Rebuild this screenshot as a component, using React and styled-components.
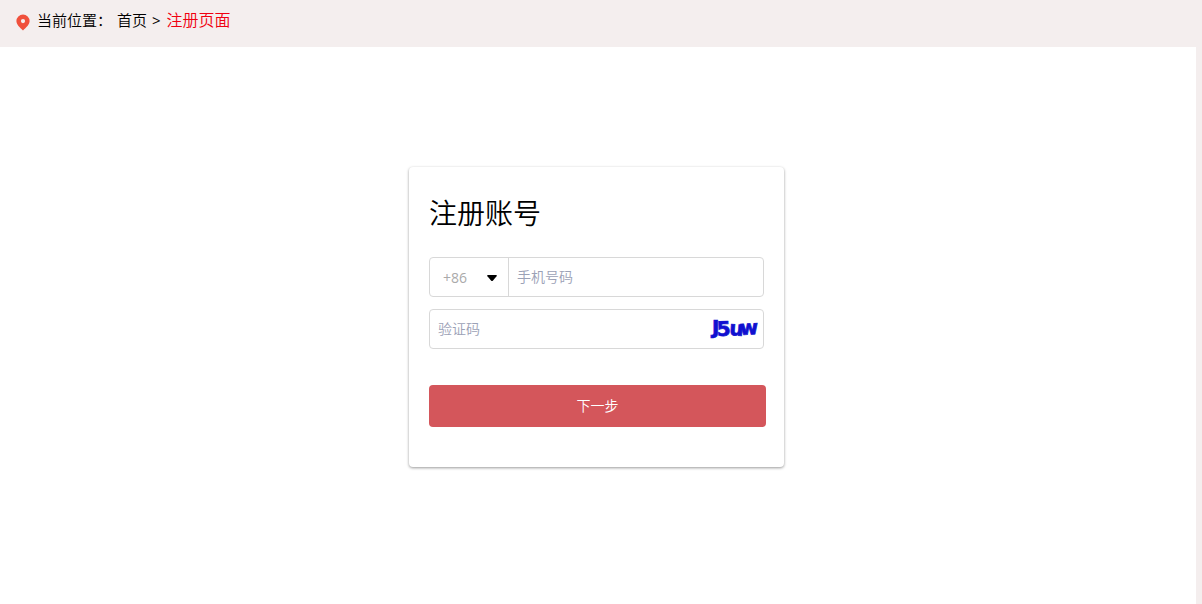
import React, { useState } from 'react';
import styled, { createGlobalStyle } from 'styled-components';

const GlobalStyle = createGlobalStyle`
  * {
    box-sizing: border-box;
  }

  body {
    margin: 0;
    background-color: #f4eeee;
    font-family: 'Open Sans', 'Noto Sans CJK SC', sans-serif;
    font-weight: 350;
    color: #000;
  }
`;

const PageContainer = styled.div`
  display: flex;
  flex-direction: column;
  min-height: 100vh;
`;

const Breadcrumb = styled.nav`
  display: flex;
  align-items: center;
  height: 47px;
  padding: 0 16px 8px;
  font-size: 15px;
  line-height: 20px;
`;

const PinIcon = styled.svg`
  width: 14px;
  height: 17px;
  margin: 5px 7px 0 0;
`;

const HomeLink = styled.a`
  margin: 0 5px;
  color: #000;
  text-decoration: none;
`;

const Separator = styled.span`
  font-weight: 400;
`;

const CurrentPage = styled.span`
  margin-left: 6px;
  font-size: 16px;
  color: #f00010;
`;

const Main = styled.main`
  display: flex;
  flex: 1;
  justify-content: center;
  align-items: flex-start;
  margin-right: 6px;
  padding: 120px 3px 40px 0;
  background-color: #fff;
`;

const Card = styled.form`
  width: 375px;
  padding: 24px 20px 40px;
  border-radius: 4px;
  background-color: #fff;
  box-shadow: 0 1px 3px rgba(0, 0, 0, 0.4);
`;

const Title = styled.h1`
  margin: 0 0 22px;
  font-size: 28px;
  font-weight: 350;
  line-height: 44px;
`;

const Field = styled.div`
  display: flex;
  align-items: center;
  height: 40px;
  margin-bottom: 12px;
  border: 1px solid #d8d8d8;
  border-radius: 4px;
`;

const AreaCode = styled.div`
  position: relative;
  width: 79px;
  height: 100%;
  border-right: 1px solid #d8d8d8;
`;

const AreaSelect = styled.select`
  width: 100%;
  height: 100%;
  padding: 0 24px 0 13px;
  border: 0;
  appearance: none;
  background: transparent;
  font: inherit;
  font-size: 14px;
  font-weight: 400;
  color: #aaa;
`;

const Arrow = styled.svg`
  position: absolute;
  top: 17px;
  right: 11px;
  width: 10px;
  height: 6px;
  pointer-events: none;
`;

const Input = styled.input`
  flex: 1;
  min-width: 0;
  height: 100%;
  padding: 0 8px 2px;
  border: 0;
  background: transparent;
  font: inherit;
  font-size: 14px;

  &::placeholder {
    color: #9ba1b6;
  }
`;

const CaptchaButton = styled.button`
  display: flex;
  padding: 0;
  margin-right: 4px;
  border: 0;
  background: none;
  cursor: pointer;
`;

const CaptchaImage = styled.svg`
  width: 50px;
  height: 30px;
  overflow: visible;
`;

const SubmitButton = styled.button`
  display: block;
  width: calc(100% + 2px);
  height: 42px;
  margin-top: 36px;
  padding: 0 0 2px;
  border: 0;
  border-radius: 4px;
  background-color: #d4565b;
  font: inherit;
  font-size: 14px;
  color: #fff;
  cursor: pointer;
`;

const RegisterPage = () => {
  const [phone, setPhone] = useState('');
  const [code, setCode] = useState('');

  return (
    <PageContainer>
      <GlobalStyle />
      <Breadcrumb>
        <PinIcon viewBox="0 0 14 17" aria-hidden="true">
          <path
            fillRule="evenodd"
            fill="#f0503c"
            d="M7 0.5a6.6 6.6 0 0 0-6.6 6.6c0 3.6 3.4 6.3 6.6 9.4 3.2-3.1 6.6-5.8 6.6-9.4A6.6 6.6 0 0 0 7 0.5zM7 5a2.1 2.1 0 1 1 0 4.2A2.1 2.1 0 0 1 7 5z"
          />
        </PinIcon>
        <span>当前位置：</span>
        <HomeLink href="#">首页</HomeLink>
        <Separator>&gt;</Separator>
        <CurrentPage>注册页面</CurrentPage>
      </Breadcrumb>
      <Main>
        <Card onSubmit={(e) => e.preventDefault()}>
          <Title>注册账号</Title>
          <Field>
            <AreaCode>
              <AreaSelect aria-label="区号" defaultValue="+86">
                <option value="+86">+86</option>
              </AreaSelect>
              <Arrow viewBox="0 0 10 6" aria-hidden="true">
                <path d="M0.8 0h8.4q1 0.4 0.4 1.2L6 5.4q-1 1-2 0L0.4 1.2Q-0.2 0.4 0.8 0z" />
              </Arrow>
            </AreaCode>
            <Input
              type="tel"
              aria-label="手机号码"
              placeholder="手机号码"
              value={phone}
              onChange={(e) => setPhone(e.target.value)}
            />
          </Field>
          <Field>
            <Input
              type="text"
              aria-label="验证码"
              placeholder="验证码"
              value={code}
              onChange={(e) => setCode(e.target.value)}
            />
            <CaptchaButton type="button">
              <CaptchaImage viewBox="0 0 50 30">
                <text
                  x="3 8 20 31"
                  y="20 22 21 21"
                  rotate="0 -2 4 -3"
                  fontFamily="DejaVu Sans, sans-serif"
                  fontSize="20"
                  fontWeight="700"
                  fill="#1010d0"
                  stroke="#1010d0"
                  strokeWidth="0.7"
                >
                  J5uw
                </text>
              </CaptchaImage>
            </CaptchaButton>
          </Field>
          <SubmitButton type="submit">下一步</SubmitButton>
        </Card>
      </Main>
    </PageContainer>
  );
};

export default RegisterPage;
